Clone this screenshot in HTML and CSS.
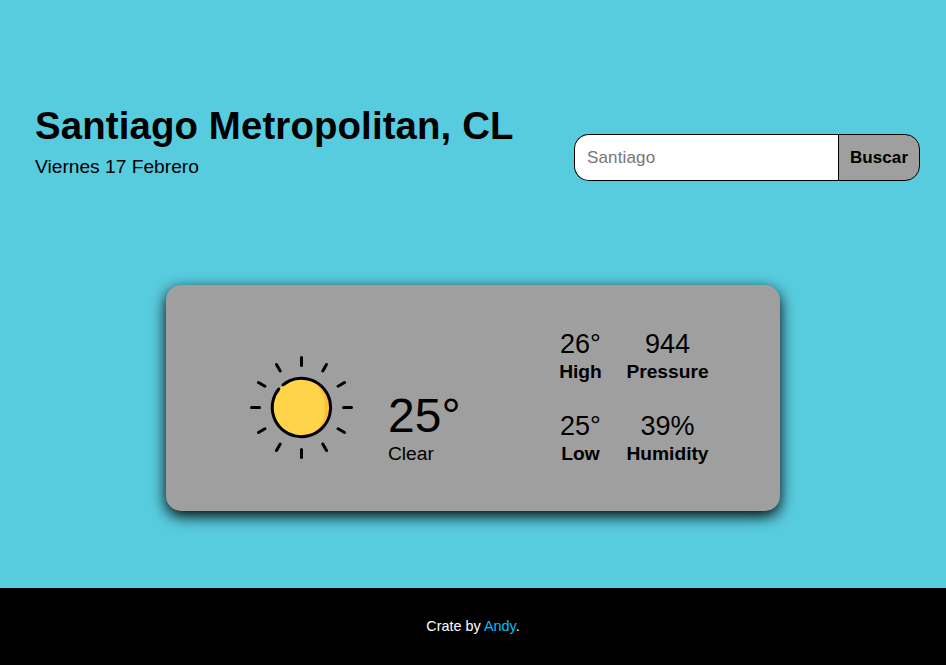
FILE: index.html
```html
<!DOCTYPE html>
<html lang="es">
<head>
<meta charset="utf-8">
<title>Clima</title>
<link rel="stylesheet" href="styles.css">
</head>
<body>
<main>
  <header class="top">
    <div class="place">
      <h1>Santiago Metropolitan, CL</h1>
      <p>Viernes 17 Febrero</p>
    </div>
    <form class="search">
      <input type="text" placeholder="Santiago">
      <button type="button">Buscar</button>
    </form>
  </header>
  <section class="card">
    <svg class="sun" viewBox="-52.500 -52.500 105 105" fill="none" stroke="#000" stroke-width="3" stroke-linecap="round">
      <circle r="29" fill="#ffd34a" stroke="none"/>
      <path d="M8 -28A29 29 0 0 1 5 28.500C29 22 30 -16 8 -28Z" fill="#ffbe35" stroke="none"/>
      <path d="M-18.500 -22.700A29.200 29.200 0 1 1 -22.700 -18.500"/>
      <path d="M0 -50v8M0 42v8M-50 0h8M42 0h8M-25 -43l3.700 6.400M21.300 36.600l3.700 6.400M25 -43l-3.700 6.400M-21.300 36.600l-3.700 6.400M-43 -25l6.400 3.700M36.600 21.300l6.400 3.700M-43 25l6.400 -3.700M36.600 -21.300l6.400 -3.700"/>
    </svg>
    <div class="now"><span class="temp">25°</span><span class="sky">Clear</span></div>
    <dl class="stats">
      <div><dd>26°</dd><dt>High</dt></div>
      <div><dd>944</dd><dt>Pressure</dt></div>
      <div><dd>25°</dd><dt>Low</dt></div>
      <div><dd>39%</dd><dt>Humidity</dt></div>
    </dl>
  </section>
</main>
<footer><p>Crate by <a href="#">Andy</a>.</p></footer>
</body>
</html>
```
FILE: styles.css
```css
* { box-sizing: border-box; margin: 0; padding: 0; }
body {
  height: 665px;
  display: flex;
  flex-direction: column;
  background: #58ccdf;
  color: #000;
  font-family: "Liberation Sans", Arial, sans-serif;
}
main { height: 588px; }
.top {
  height: 285px;
  padding: 102px 26px 0 35px;
  display: flex;
  justify-content: space-between;
  align-items: flex-start;
}
.place h1 {
  font-size: 38.4px;
  line-height: 48px;
  letter-spacing: .12px;
  white-space: nowrap;
}
.place p { margin-top: 6px; font-size: 19.2px; line-height: 22px; }
.search {
  margin-top: 32px;
  width: 346px;
  height: 47px;
  display: flex;
}
.search input {
  width: 264px;
  padding: 0 12px;
  border: 1px solid #000;
  border-radius: 15px 0 0 15px;
  border-right: 0;
  background: #fff;
  font: 17px "Liberation Sans", Arial, sans-serif;
  letter-spacing: .15px;
}
.search button {
  width: 82px;
  flex: 1;
  border: 1px solid #000;
  border-radius: 0 15px 15px 0;
  background: #9f9f9f;
  color: #000;
  font: bold 17px "Liberation Sans", Arial, sans-serif;
  letter-spacing: .1px;
}
.card {
  width: 614px;
  height: 226px;
  margin: 0 auto;
  padding-left: 83px;
  display: flex;
  align-items: flex-start;
  border-radius: 15px;
  background: #9f9f9f;
  box-shadow: 0 5px 15px #000;
}
.sun { width: 105px; height: 105px; margin-top: 70px; }
.now { width: 171px; margin: 103px 0 0 34px; }
.temp { display: block; font-size: 48px; line-height: 55px; }
.sky { display: block; font-size: 19.2px; line-height: 22px; }
.stats {
  display: grid;
  grid-template-columns: 43px 83px;
  gap: 28px 24px;
  margin-top: 43px;
  text-align: center;
}
.stats dd { font-size: 27px; line-height: 33px; }
.stats dt { font-size: 19.2px; line-height: 21px; font-weight: bold; }
footer {
  flex: 1;
  display: flex;
  align-items: center;
  justify-content: center;
  padding-bottom: 2px;
  background: #000;
  color: #fff;
  font-size: 14.4px;
}
footer a { color: #00bfff; text-decoration: none; }
```
